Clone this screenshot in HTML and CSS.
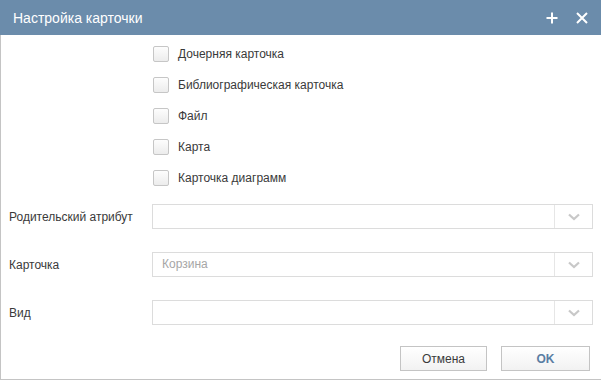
FILE: index.html
```html
<!DOCTYPE html>
<html lang="ru">
<head>
    <meta charset="UTF-8">
    <title>Настройка карточки</title>
    <link rel="stylesheet" href="styles.css">
</head>
<body>

<div class="dialog">
    <!-- Header -->
    <div class="dialog-header">
        <span class="dialog-title">Настройка карточки</span>
        <div class="header-tools">
            <svg class="tool" width="12" height="12" viewBox="0 0 12 12">
                <path d="M6 0.5V11.5M0.5 6H11.5" stroke="#fff" stroke-width="2"/>
            </svg>
            <svg class="tool" width="12" height="12" viewBox="0 0 12 12">
                <path d="M1 1L11 11M11 1L1 11" stroke="#fff" stroke-width="2"/>
            </svg>
        </div>
    </div>

    <div class="dialog-body">
        <!-- Checkboxes -->
        <div class="check-list">
            <label class="check-row"><span class="check-box"></span>Дочерняя карточка</label>
            <label class="check-row"><span class="check-box"></span>Библиографическая карточка</label>
            <label class="check-row"><span class="check-box"></span>Файл</label>
            <label class="check-row"><span class="check-box"></span>Карта</label>
            <label class="check-row"><span class="check-box"></span>Карточка диаграмм</label>
        </div>

        <!-- Fields -->
        <div class="field-row">
            <div class="field-label">Родительский атрибут</div>
            <div class="combo">
                <div class="combo-value"></div>
                <div class="combo-trigger">
                    <svg width="12" height="8" viewBox="0 0 12 8"><path d="M1 1.5L6 6L11 1.5" stroke="#c8c8c8" stroke-width="2.2" fill="none"/></svg>
                </div>
            </div>
        </div>
        <div class="field-row">
            <div class="field-label">Карточка</div>
            <div class="combo">
                <div class="combo-value placeholder">Корзина</div>
                <div class="combo-trigger">
                    <svg width="12" height="8" viewBox="0 0 12 8"><path d="M1 1.5L6 6L11 1.5" stroke="#c8c8c8" stroke-width="2.2" fill="none"/></svg>
                </div>
            </div>
        </div>
        <div class="field-row">
            <div class="field-label">Вид</div>
            <div class="combo">
                <div class="combo-value"></div>
                <div class="combo-trigger">
                    <svg width="12" height="8" viewBox="0 0 12 8"><path d="M1 1.5L6 6L11 1.5" stroke="#c8c8c8" stroke-width="2.2" fill="none"/></svg>
                </div>
            </div>
        </div>

        <!-- Buttons -->
        <div class="button-bar">
            <button class="btn">Отмена</button>
            <button class="btn btn-ok">OK</button>
        </div>
    </div>
</div>

</body>
</html>
```

FILE: styles.css
```css
/* Global Styling */
* {
    margin: 0;
    padding: 0;
    box-sizing: border-box;
    font-family: "Liberation Sans", Arial, sans-serif;
}

body {
    width: 601px;
    height: 381px;
    background-color: #fff;
    color: #3a3a3a;
    overflow: hidden;
}

/* Dialog */
.dialog {
    width: 601px;
    height: 380px;
    border-left: 1px solid #c4c4c4;
    border-bottom: 1px solid #c4c4c4;
    display: flex;
    flex-direction: column;
}

.dialog-header {
    height: 35px;
    margin-left: -1px;
    background-color: #6b8cab;
    display: flex;
    align-items: center;
    justify-content: space-between;
    padding: 0 13px 0 13px;
}

.dialog-title {
    color: #fff;
    font-size: 14px;
}

.header-tools {
    display: flex;
    gap: 18px;
    align-items: center;
}

/* Body */
.dialog-body {
    flex: 1;
    padding: 11px 8px 0 8px;
}

.check-list {
    display: flex;
    flex-direction: column;
    gap: 15px;
    padding-left: 144px;
}

.check-row {
    display: flex;
    align-items: center;
    height: 16px;
    font-size: 12px;
    color: #3a3a3a;
}

.check-box {
    width: 16px;
    height: 16px;
    border: 1px solid #c6c6c6;
    border-radius: 2px;
    background: linear-gradient(#fdfdfd, #ececec);
    margin-right: 9px;
}

/* Field rows */
.field-row {
    display: flex;
    align-items: center;
    height: 25px;
    margin-top: 23px;
}

.check-list + .field-row {
    margin-top: 18px;
}

.field-label {
    width: 143px;
    font-size: 12px;
    color: #3a3a3a;
}

.combo {
    width: 441px;
    height: 25px;
    border: 1px solid #dcdcdc;
    display: flex;
}

.combo-value {
    flex: 1;
    font-size: 12px;
    line-height: 23px;
    padding-left: 9px;
}

.combo-value.placeholder {
    color: #a6a6a6;
}

.combo-trigger {
    width: 38px;
    border-left: 1px solid #e6e6e6;
    display: flex;
    align-items: center;
    justify-content: center;
}

/* Buttons */
.button-bar {
    display: flex;
    justify-content: flex-end;
    gap: 14px;
    margin-top: 21px;
    padding-right: 3px;
}

.btn {
    width: 87px;
    height: 25px;
    border: 1px solid #c4c4c4;
    background: linear-gradient(#ffffff, #f2f2f2);
    font-size: 12px;
    color: #3a3a3a;
}

.btn-ok {
    width: 89px;
    color: #5a7ea3;
    font-weight: bold;
}
```
